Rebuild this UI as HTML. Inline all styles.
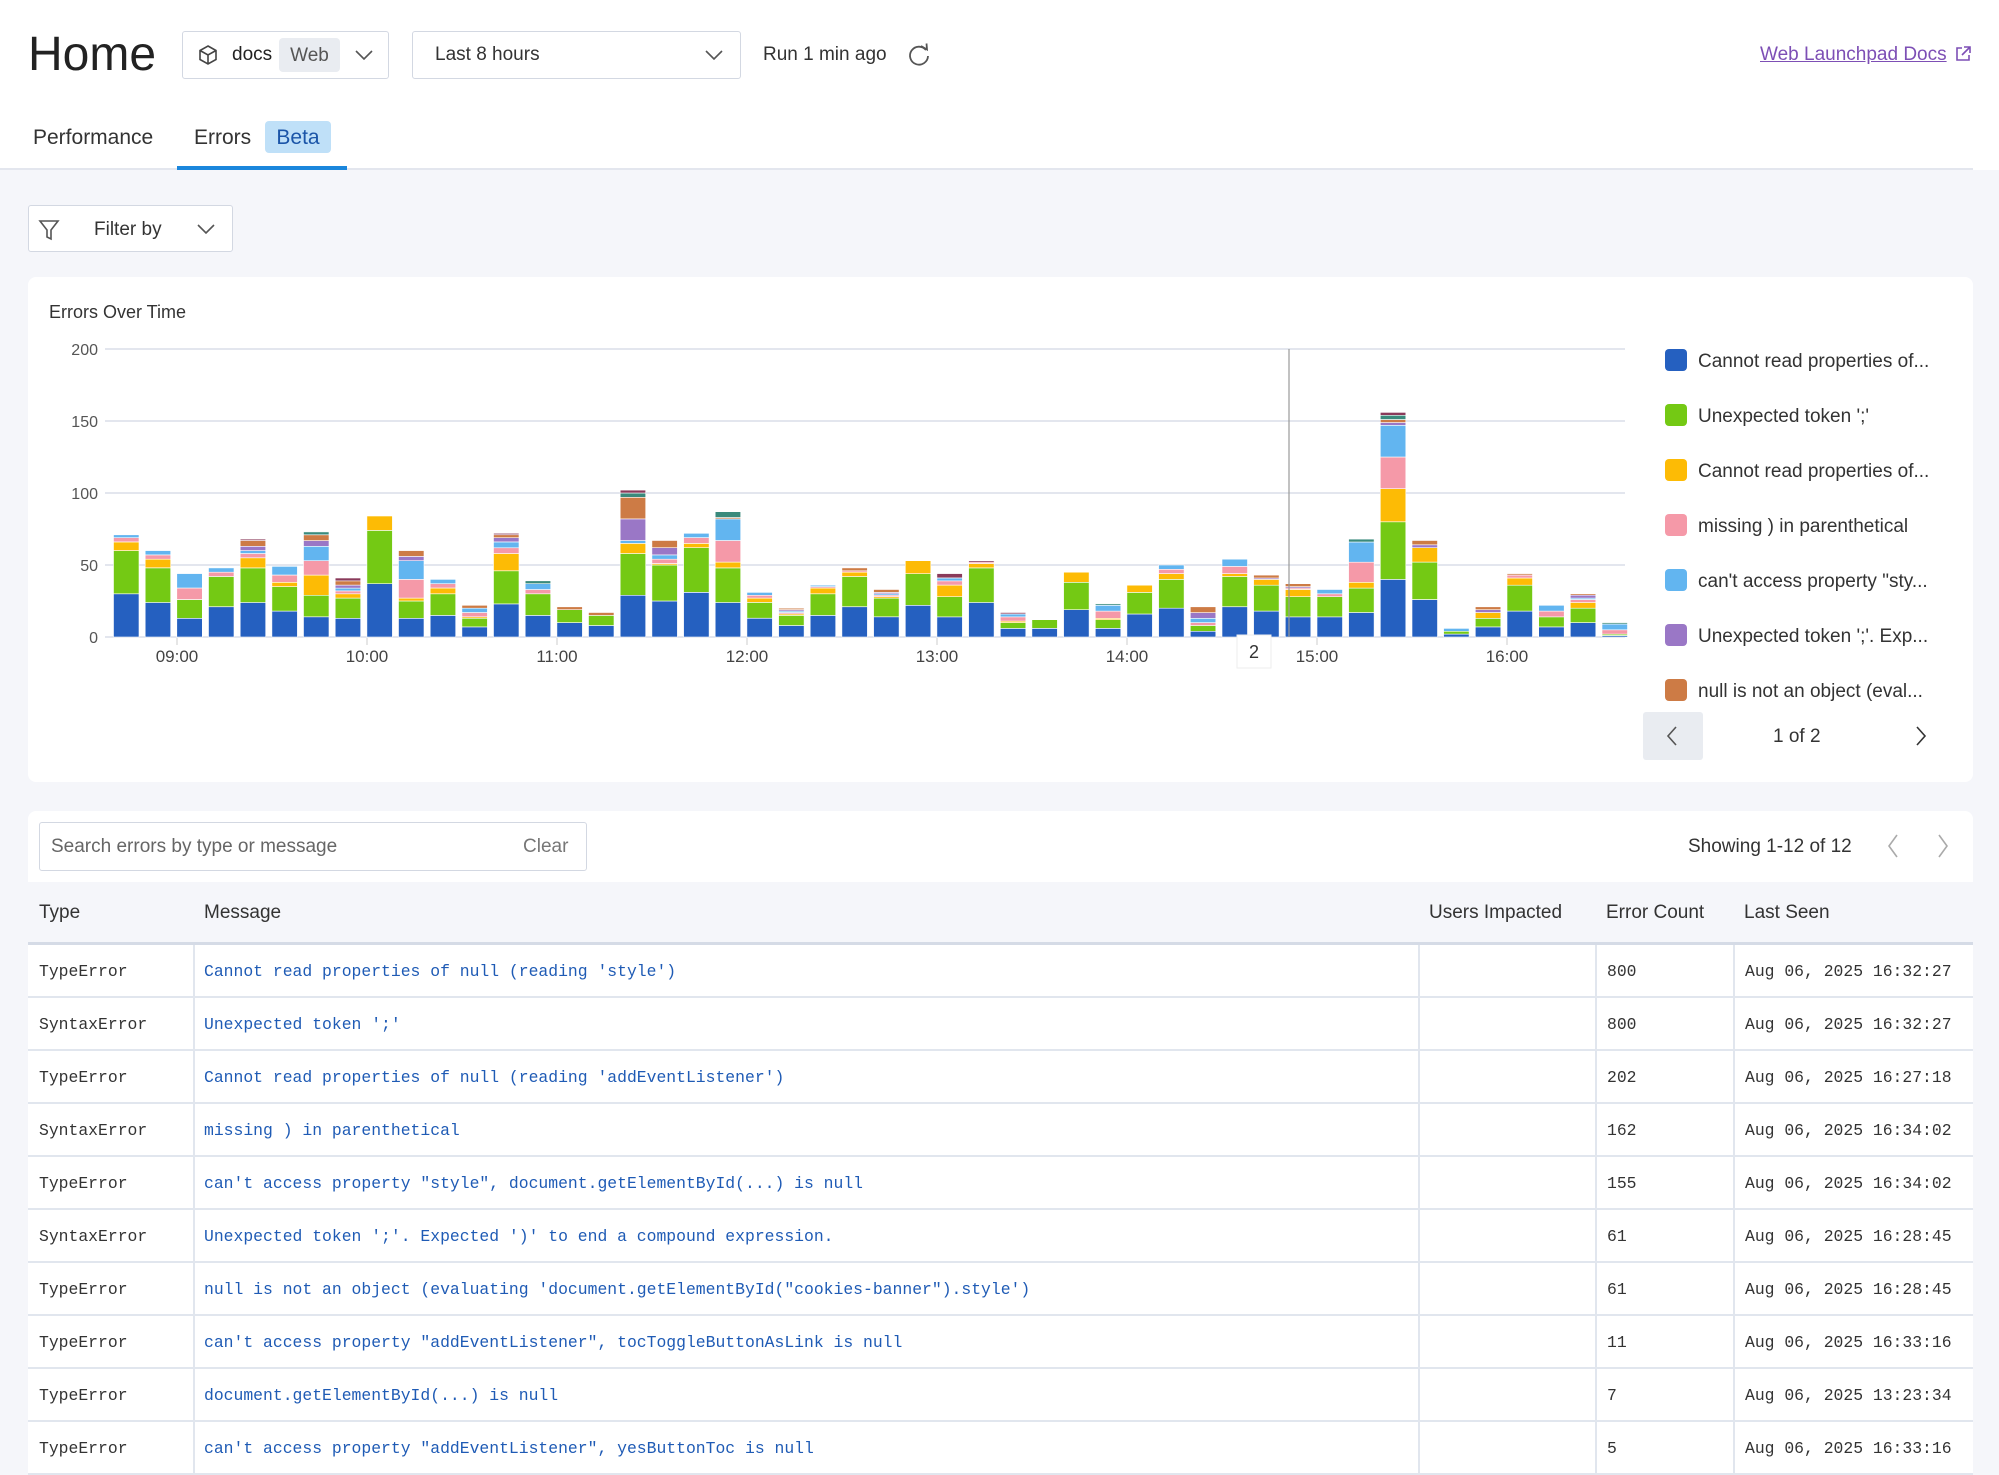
<!DOCTYPE html>
<html><head><meta charset="utf-8">
<style>
*{box-sizing:border-box;margin:0;padding:0}
body{width:1999px;height:1456px;overflow:hidden;background:#f5f6fa;font-family:"Liberation Sans",sans-serif;color:#333;position:relative}
.abs{position:absolute}
.hdr{left:0;top:0;width:1999px;height:170px;background:#fff}
.box{border:1.5px solid #d3d8e2;border-radius:3px;background:#fff}
.mono{font-family:"Liberation Mono",monospace}
</style></head><body>
<div class="abs hdr"></div>
<div class="abs" style="left:0;top:168px;width:1973px;height:2px;background:#e3e6ee"></div>
<div class="abs" style="left:28px;top:27px;font-size:48px;color:#222">Home</div>
<div class="abs box" style="left:182px;top:31px;width:207px;height:48px"></div>
<svg class="abs" style="left:197px;top:44px" width="22" height="22" viewBox="0 0 22 22" fill="none" stroke="#444" stroke-width="1.6"><path d="M11 2 L19 6.5 V15.5 L11 20 L3 15.5 V6.5 Z M3 6.5 L11 11 L19 6.5 M11 11 V20"/></svg>
<div class="abs" style="left:232px;top:44px;font-size:19px;color:#222">docs</div>
<div class="abs" style="left:279px;top:38px;width:61px;height:34px;background:#e9ecf1;border-radius:4px;font-size:19px;color:#555;text-align:center;line-height:36px">Web</div>
<svg class="abs" style="left:354px;top:48px" width="20" height="14"><path d="M2 3 L10 11 L18 3" fill="none" stroke="#555" stroke-width="1.6"/></svg>
<div class="abs box" style="left:412px;top:31px;width:329px;height:48px"></div>
<div class="abs" style="left:435px;top:44px;font-size:19px;color:#333">Last 8 hours</div>
<svg class="abs" style="left:704px;top:48px" width="20" height="14"><path d="M2 3 L10 11 L18 3" fill="none" stroke="#555" stroke-width="1.6"/></svg>
<div class="abs" style="left:763px;top:44px;font-size:19px;color:#333">Run 1 min ago</div>
<svg class="abs" style="left:906px;top:42px" width="26" height="26" viewBox="0 0 26 26" fill="none" stroke="#555" stroke-width="1.8"><path d="M20 8 A9 9 0 1 0 22 14"/><path d="M15 4 L21 7.5 L20.5 1.5"/></svg>
<div class="abs" style="left:1760px;top:44px;font-size:19px;color:#7d4fb5;text-decoration:underline">Web Launchpad Docs</div>
<svg class="abs" style="left:1954px;top:45px" width="18" height="18" viewBox="0 0 18 18" fill="none" stroke="#7d4fb5" stroke-width="1.6"><path d="M8 3 H3 V15 H15 V10 M10 2 H16 V8 M16 2 L8 10"/></svg>
<div class="abs" style="left:33px;top:126px;font-size:21px;color:#333">Performance</div>
<div class="abs" style="left:194px;top:126px;font-size:21px;color:#333">Errors</div>
<div class="abs" style="left:265px;top:121px;width:66px;height:32px;background:#bfe0f8;border-radius:4px;font-size:21px;color:#1b55a8;text-align:center;line-height:34px">Beta</div>
<div class="abs" style="left:177px;top:166px;width:170px;height:4px;background:#1a86dc"></div>

<div class="abs box" style="left:28px;top:205px;width:205px;height:47px"></div>
<svg class="abs" style="left:38px;top:218px" width="22" height="24" viewBox="0 0 22 24" fill="none" stroke="#555" stroke-width="1.6"><path d="M2 3 H20 L13 12 V21 L9 19 V12 Z"/></svg>
<div class="abs" style="left:94px;top:219px;font-size:19px;color:#333">Filter by</div>
<svg class="abs" style="left:196px;top:222px" width="20" height="14"><path d="M2 3 L10 11 L18 3" fill="none" stroke="#555" stroke-width="1.6"/></svg>

<div class="abs" style="left:28px;top:277px;width:1945px;height:505px;background:#fff;border-radius:8px"></div>
<div class="abs" style="left:49px;top:302px;font-size:18px;color:#333">Errors Over Time</div>
<svg id="ch" class="abs" style="left:0;top:0" width="1999" height="800"></svg>
<div class="abs" style="left:1643px;top:712px;width:60px;height:48px;background:#e9ecf1;border-radius:3px"></div>
<svg class="abs" style="left:1664px;top:725px" width="16" height="22"><path d="M12 2 L4 11 L12 20" fill="none" stroke="#555" stroke-width="1.6"/></svg>
<div class="abs" style="left:1773px;top:726px;font-size:19px;color:#333">1 of 2</div>
<svg class="abs" style="left:1913px;top:725px" width="16" height="22"><path d="M4 2 L12 11 L4 20" fill="none" stroke="#333" stroke-width="1.6"/></svg>

<div class="abs" style="left:28px;top:811px;width:1945px;height:71px;background:#fff;border-radius:8px 8px 0 0"></div>
<div class="abs box" style="left:39px;top:822px;width:548px;height:49px"></div>
<div class="abs" style="left:51px;top:836px;font-size:19px;color:#666">Search errors by type or message</div>
<div class="abs" style="left:523px;top:836px;font-size:19px;color:#777">Clear</div>
<div class="abs" style="left:1688px;top:836px;font-size:19px;color:#333">Showing 1-12 of 12</div>
<svg class="abs" style="left:1885px;top:833px" width="16" height="26"><path d="M12 2 L4 13 L12 24" fill="none" stroke="#aaa" stroke-width="1.6"/></svg>
<svg class="abs" style="left:1935px;top:833px" width="16" height="26"><path d="M4 2 L12 13 L4 24" fill="none" stroke="#aaa" stroke-width="1.6"/></svg>
<div class="abs" style="left:39px;top:902px;font-size:19px;color:#333">Type</div>
<div class="abs" style="left:204px;top:902px;font-size:19px;color:#333">Message</div>
<div class="abs" style="left:1429px;top:902px;font-size:19px;color:#333">Users Impacted</div>
<div class="abs" style="left:1606px;top:902px;font-size:19px;color:#333">Error Count</div>
<div class="abs" style="left:1744px;top:902px;font-size:19px;color:#333">Last Seen</div>
<div class="abs" style="left:28px;top:942px;width:1945px;height:3px;background:#d5dbe6"></div>
<div id="rows"></div>

<script>
var C=["#2560c0","#74c914","#fdbb05","#f599a8","#62b5f0","#9a77c6","#cd7b45","#3a8a7c","#8a3a5a"];
var D=[[30,30,6,3,2],[24,24,6,3,3],[13,13,0,8,10],[21,21,0,3,3],[24,24,7,3,2,3,4,0,1],[18,17,3,5,6],[14,15,14,10,10,4,4,2],[13,14,3,2,2,2,3,0,2],[37,37,10],[13,12,2,13,13,3,4],[15,15,4,3,3],[7,6,1,3,3,0,2],[23,23,12,4,4,3,2,0,1],[15,15,0,3,4,0,0,2],[10,9,0,0,0,0,2],[8,7,0,0,0,0,2],[29,29,7,0,2,15,15,3,2],[25,25,1,3,3,5,5],[31,31,3,4,3],[24,24,4,15,15,0,1,4],[13,11,3,2,2],[8,7,1,1,1,1,1],[15,15,4,1,1],[21,21,3,1,0,0,2],[14,13,1,1,1,1,2],[22,22,9],[14,14,8,3,2,0,0,0,3],[24,24,3,1,0,0,0,0,1],[6,4,1,3,2,0,0,0,1],[6,6],[19,19,7],[6,6,1,5,4,0,0,1],[16,15,5],[20,20,4,3,3],[4,4,0,2,3,4,4],[21,21,2,5,5],[18,18,4,0,0,1,2],[14,14,5,1,0,1,2],[14,14,0,2,3],[17,17,4,14,14,0,0,2],[40,40,23,22,22,2,2,3,2],[26,26,10,0,0,2,3],[2,2,0,0,2],[7,6,4,0,0,2,2],[18,18,5,2,0,0,1],[7,7,0,4,4],[10,10,4,2,1,2,1],[1,1,0,3,4,0,0,1]];
var s='',base=637,k=1.44;
[0,50,100,150,200].forEach(function(v){var y=base-v*k;s+='<line x1="105" x2="1625" y1="'+y+'" y2="'+y+'" stroke="#e3e6ee" stroke-width="2"/>';s+='<text x="98" y="'+(y+6)+'" text-anchor="end" font-size="16" fill="#555" font-family="Liberation Sans">'+v+'</text>';});
D.forEach(function(b,i){var x=113.5+i*31.67,y=base;b.forEach(function(v,j){if(!v)return;var h=v*k;y-=h;s+='<rect x="'+x.toFixed(1)+'" y="'+y.toFixed(1)+'" width="25.5" height="'+h.toFixed(1)+'" fill="'+C[j]+'" stroke="#fff" stroke-width="0.6"/>';});});
["09:00","10:00","11:00","12:00","13:00","14:00","15:00","16:00"].forEach(function(t,i){var x=177+i*190;s+='<line x1="'+x+'" x2="'+x+'" y1="638" y2="645" stroke="#ccc"/><text x="'+x+'" y="662" text-anchor="middle" font-size="17" fill="#444" font-family="Liberation Sans">'+t+'</text>';});
s+='<line x1="1289" x2="1289" y1="349" y2="637" stroke="#999" stroke-width="1.2"/>';
s+='<rect x="1237" y="635" width="34" height="33" fill="#fff" stroke="#eee"/><text x="1254" y="658" text-anchor="middle" font-size="18" fill="#333" font-family="Liberation Sans">2</text>';
var L=["Cannot read properties of...","Unexpected token ';'","Cannot read properties of...","missing ) in parenthetical","can't access property \"sty...","Unexpected token ';'. Exp...","null is not an object (eval..."];
L.forEach(function(t,i){var y=360+i*55;s+='<rect x="1665" y="'+(y-11)+'" width="22" height="22" rx="4" fill="'+C[i]+'"/><text x="1698" y="'+(y+7)+'" font-size="19" fill="#333" font-family="Liberation Sans">'+t.replace(/&/g,'&amp;').replace(/</g,'&lt;')+'</text>';});
document.getElementById('ch').innerHTML=s;
var R=[["TypeError","Cannot read properties of null (reading 'style')","800","Aug 06, 2025 16:32:27"],["SyntaxError","Unexpected token ';'","800","Aug 06, 2025 16:32:27"],["TypeError","Cannot read properties of null (reading 'addEventListener')","202","Aug 06, 2025 16:27:18"],["SyntaxError","missing ) in parenthetical","162","Aug 06, 2025 16:34:02"],["TypeError","can't access property \"style\", document.getElementById(...) is null","155","Aug 06, 2025 16:34:02"],["SyntaxError","Unexpected token ';'. Expected ')' to end a compound expression.","61","Aug 06, 2025 16:28:45"],["TypeError","null is not an object (evaluating 'document.getElementById(\"cookies-banner\").style')","61","Aug 06, 2025 16:28:45"],["TypeError","can't access property \"addEventListener\", tocToggleButtonAsLink is null","11","Aug 06, 2025 16:33:16"],["TypeError","document.getElementById(...) is null","7","Aug 06, 2025 13:23:34"],["TypeError","can't access property \"addEventListener\", yesButtonToc is null","5","Aug 06, 2025 16:33:16"]];
var h='';
function esc(t){return t.replace(/&/g,'&amp;').replace(/</g,'&lt;');}
R.forEach(function(r,i){var y=945+i*53;
h+='<div class="abs" style="left:28px;top:'+y+'px;width:1945px;height:53px;background:#fff;border-bottom:2px solid #e1e6ee"></div>';
[193,1418,1595,1733].forEach(function(x){h+='<div class="abs" style="left:'+x+'px;top:'+y+'px;width:2px;height:53px;background:#e1e6ee"></div>';});
h+='<div class="abs mono" style="left:39px;top:'+(y+17)+'px;font-size:16.4px;color:#333">'+r[0]+'</div>';
h+='<div class="abs mono" style="left:204px;top:'+(y+17)+'px;font-size:16.4px;color:#1f5bb5;white-space:pre">'+esc(r[1])+'</div>';
h+='<div class="abs mono" style="left:1607px;top:'+(y+17)+'px;font-size:16.4px;color:#333">'+r[2]+'</div>';
h+='<div class="abs mono" style="left:1745px;top:'+(y+17)+'px;font-size:16.4px;color:#333;white-space:pre">'+r[3]+'</div>';});
document.getElementById('rows').innerHTML=h;
</script>
</body></html>
